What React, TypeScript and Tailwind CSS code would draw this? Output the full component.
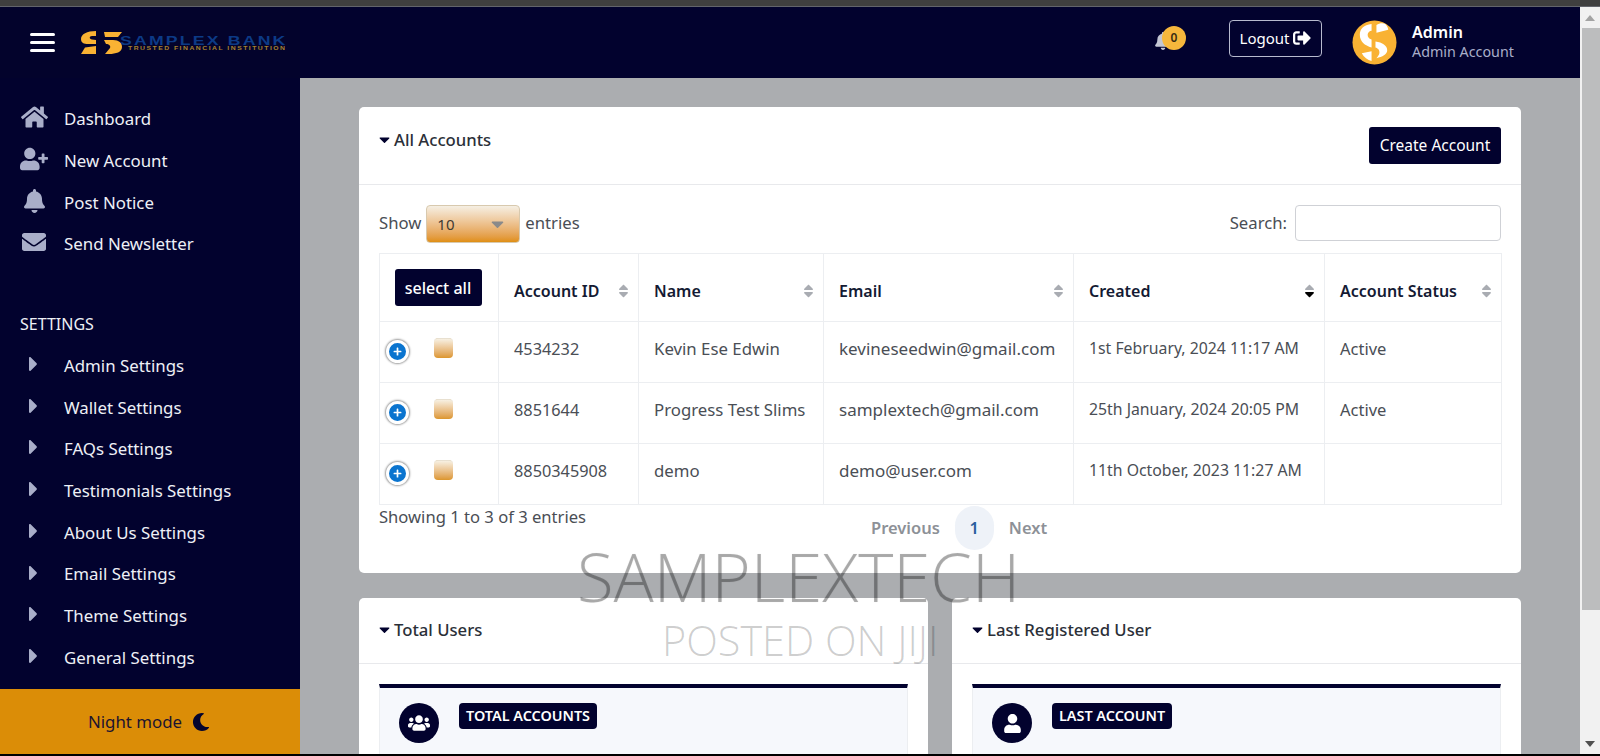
import { FaHome, FaUserPlus, FaBell, FaEnvelope, FaCaretRight, FaCaretDown, FaMoon, FaSignOutAlt, FaUsers, FaUser, FaSort, FaSortDown, FaSortUp, FaPlus } from 'react-icons/fa';
import type { ReactNode } from 'react';

const fontStack = { fontFamily: '"Noto Sans", "Open Sans", sans-serif' };

const mainMenu = [
  { label: 'Dashboard', icon: <FaHome className="w-[27px] h-[24px]" /> },
  { label: 'New Account', icon: <FaUserPlus className="w-[29px] h-[24px]" /> },
  { label: 'Post Notice', icon: <FaBell className="w-[21px] h-[24px]" /> },
  { label: 'Send Newsletter', icon: <FaEnvelope className="w-[24px] h-[24px]" /> },
];

const settingsMenu = [
  'Admin Settings',
  'Wallet Settings',
  'FAQs Settings',
  'Testimonials Settings',
  'About Us Settings',
  'Email Settings',
  'Theme Settings',
  'General Settings',
];

const accounts = [
  { id: '4534232', name: 'Kevin Ese Edwin', email: 'kevineseedwin@gmail.com', created: '1st February, 2024 11:17 AM', status: 'Active' },
  { id: '8851644', name: 'Progress Test Slims', email: 'samplextech@gmail.com', created: '25th January, 2024 20:05 PM', status: 'Active' },
  { id: '8850345908', name: 'demo', email: 'demo@user.com', created: '11th October, 2023 11:27 AM', status: '' },
];

function LogoMark({ className }: { className: string }) {
  return (
    <svg viewBox="0 0 42 24" className={className}>
      <path d="M0 8 C0 3 6 0 15 0 L15 5 L11 5 C8 5 8 8 11 8.5 L15 9 L15 13 L7 13 C3 13 0 12 0 8Z" fill="#f9b233" />
      <path d="M0 23 L4 16.5 L15 15 L15 23Z" fill="#f9b233" />
      <path d="M23 1 L41 1 L37 6 L24 6Z" fill="#f9b233" />
      <path d="M23 9 L32 9 C38 9 41 12 41 16 C41 21 35 23 28 23 L24 23 L29 17 C30 15 28 13 25 13Z" fill="#f9b233" />
    </svg>
  );
}

function Avatar() {
  return (
    <svg viewBox="0 0 46 46" className="w-[45px] h-[45px]">
      <circle cx="23" cy="23" r="22.5" fill="#f9b233" />
      <path d="M20 4 C12 5 8 9 8 15 C8 22 13 26 20 28 L20 20 C17 19 16 17 16 15 C16 13 18 11 20 11Z" fill="#fff" />
      <path d="M25 5 C28 3 32 3 34 4 C36 6 37 8 37 10 L25 13Z" fill="#fff" />
      <path d="M24 22 C31 23 36 26 36 31 C36 35 31 38 25 39 C28 36 29 33 27 30 C26 29 25 28 24 28Z" fill="#fff" />
      <path d="M10 34 L20 32 L20 42 C16 41 12 38 10 34Z" fill="#fff" />
    </svg>
  );
}

function Sidebar() {
  return (
    <aside className="w-[300px] shrink-0 flex flex-col bg-[#02022e] text-[#eef0f6]">
      <div className="h-[71px] flex items-center pl-[30px] bg-[#03032c]">
        <div className="flex flex-col gap-[5px] w-[25px]">
          <span className="h-[3px] bg-white rounded-sm" />
          <span className="h-[3px] bg-white rounded-sm" />
          <span className="h-[3px] bg-white rounded-sm" />
        </div>
        <div className="ml-[26px] flex items-center">
          <LogoMark className="w-[42px] h-[24px]" />
          <div className="w-[164px] -ml-[3px] leading-none">
            <div className="text-[13px] leading-[11px] font-bold tracking-[1.6px] text-[#0c3a86] whitespace-nowrap origin-left scale-x-[1.36]" style={{ fontFamily: '"Liberation Sans", sans-serif' }}>
              SAMPLEX BANK
            </div>
            <div className="text-[5px] leading-[5px] font-bold tracking-[1.1px] text-[#a8812e] whitespace-nowrap ml-[8px] origin-left scale-x-[1.36]" style={{ fontFamily: '"Liberation Sans", sans-serif' }}>
              TRUSTED FINANCIAL INSTITUTION
            </div>
          </div>
        </div>
      </div>
      <nav className="flex-1 pt-[20px]">
        <ul className="flex flex-col">
          {mainMenu.map((item) => (
            <li key={item.label} className="h-[41.7px] flex items-center">
              <span className="w-[64px] pl-[20px] pr-[16px] flex justify-center text-[#a9aec9] -mt-[3px]">{item.icon}</span>
              <span className="text-[16.85px]">{item.label}</span>
            </li>
          ))}
        </ul>
        <div className="mt-[45px] pl-[20px] text-[16px] h-[28px] flex items-center">SETTINGS</div>
        <ul className="flex flex-col mt-[7px]">
          {settingsMenu.map((label) => (
            <li key={label} className="h-[41.7px] flex items-center">
              <span className="w-[64px] pl-[29px] text-[#a9aec9] -mt-[3px]">
                <FaCaretRight className="w-[9px] h-[24px]" />
              </span>
              <span className="text-[16.85px]">{label}</span>
            </li>
          ))}
        </ul>
      </nav>
      <div className="h-[65px] bg-[#db8d07] text-[#1b1330] flex items-center justify-center gap-[10px] pr-[2px]">
        <span className="text-[16.85px]">Night mode</span>
        <FaMoon className="w-[18px] h-[18px] text-[#04042e]" />
      </div>
    </aside>
  );
}

function Header() {
  return (
    <header className="h-[71px] shrink-0 bg-[#02022e] flex items-center">
      <div className="ml-auto flex items-center">
        <div className="relative w-[32px] h-[24px] -mt-[9px] text-[#c3c6d3]">
          <FaBell className="w-[18px] h-[18px] absolute left-0 top-[6px]" />
          <span className="absolute left-[8px] top-0 w-[24px] h-[24px] rounded-full bg-[#f6b73c] text-[#3a2c12] text-[12px] font-semibold flex items-center justify-center">0</span>
        </div>
        <button className="ml-[43px] w-[93px] h-[37px] -mt-[9px] border border-[#b7bace] rounded-[4px] text-white text-[15px] flex items-center justify-center gap-[4px]">
          Logout <FaSignOutAlt className="w-[18px] h-[18px]" />
        </button>
        <div className="ml-[30px] flex"><Avatar /></div>
        <div className="ml-[15px] mr-[66px] w-[102px] leading-[20px] -mt-[2px]">
          <div className="text-white text-[16px] font-semibold">Admin</div>
          <div className="text-[#a9aec9] text-[14.3px] whitespace-nowrap">Admin Account</div>
        </div>
      </div>
    </header>
  );
}

function CardTitle({ children }: { children: ReactNode }) {
  return (
    <h3 className="flex items-center gap-[4px] text-[16.7px] font-medium text-[#2b2f38]">
      <FaCaretDown className="w-[11px] h-[17px] text-[#02022e]" />
      {children}
    </h3>
  );
}

function SortHead({ label, width, active }: { label: string; width: string; active?: boolean }) {
  return (
    <th className={`${width} border border-[#eceef1] pl-[15px] pr-[9px] pt-[6px] text-left text-[16px] font-semibold text-[#141a33]`}>
      <div className="flex items-center justify-between">
        <span className="whitespace-nowrap">{label}</span>
        {active ? (
          <span className="relative w-[11px] h-[16px]">
            <FaSortUp className="absolute inset-0 w-[11px] h-[16px] text-[#a9acb2]" />
            <FaSortDown className="absolute inset-0 w-[11px] h-[16px] text-black" />
          </span>
        ) : (
          <FaSort className="w-[11px] h-[16px] text-[#a9acb2]" />
        )}
      </div>
    </th>
  );
}

function AccountsTable() {
  return (
    <table className="w-[1122px] table-fixed border-collapse text-[16.5px] text-[#4a4e55]">
      <thead>
        <tr className="h-[68px]">
          <th className="w-[119px] border border-[#eceef1] align-middle pt-[6px] pr-[2px]">
            <button className="w-[87px] h-[37px] -mt-[6px] bg-[#02022e] text-white text-[16px] font-medium rounded-[3px]">select all</button>
          </th>
          <SortHead label="Account ID" width="w-[140px]" />
          <SortHead label="Name" width="w-[185px]" />
          <SortHead label="Email" width="w-[250px]" />
          <SortHead label="Created" width="w-[251px]" active />
          <SortHead label="Account Status" width="w-[177px]" />
        </tr>
      </thead>
      <tbody>
        {accounts.map((row) => (
          <tr key={row.id} className="h-[61px]">
            <td className="border border-[#eceef1] align-top">
              <div className="flex items-start pl-[6px]">
                <span className="mt-[18px] w-[23px] h-[23px] rounded-full border-[3px] border-white bg-[#0a74cf] text-white flex items-center justify-center shadow-[0_0_2px_1px_#9a9a9a]">
                  <FaPlus className="w-[9px] h-[9px]" />
                </span>
                <span className="mt-[16px] ml-[25px] w-[19px] h-[20px] rounded-[4px] border-t border-[#e8e0d0] bg-gradient-to-b from-[#f7f0e2] to-[#dc962a]" />
              </div>
            </td>
            <td className="border border-[#eceef1] px-[15px] pb-[6px] text-[16.3px]">{row.id}</td>
            <td className="border border-[#eceef1] px-[15px] pb-[6px] whitespace-nowrap text-[16.8px]">{row.name}</td>
            <td className="border border-[#eceef1] px-[15px] pb-[6px] whitespace-nowrap text-[17px]">{row.email}</td>
            <td className="border border-[#eceef1] px-[15px] pb-[6px] whitespace-nowrap text-[15.8px]">{row.created}</td>
            <td className="border border-[#eceef1] px-[15px] pb-[6px]">{row.status}</td>
          </tr>
        ))}
      </tbody>
    </table>
  );
}

function AllAccountsCard() {
  return (
    <section className="bg-white rounded-[5px]">
      <div className="h-[78px] border-b border-[#e8e9ec] flex items-start justify-between px-[20px]">
        <div className="mt-[20px]"><CardTitle>All Accounts</CardTitle></div>
        <button className="mt-[20px] w-[132px] h-[37px] bg-[#02022e] text-white text-[15.5px] rounded-[3px]">Create Account</button>
      </div>
      <div className="px-[20px] pt-[20px] h-[388px]">
        <div className="flex items-center justify-between h-[38px] mb-[10px] text-[16.7px] text-[#4a4e55]">
          <div className="flex items-center gap-[5px]">
            <span className="pb-[2px]">Show</span>
            <span className="w-[94px] h-[38px] rounded-[4px] border border-[#d8c9ae] bg-gradient-to-b from-[#f5efe3] to-[#e08f0d] flex items-center justify-between pl-[10px] pr-[15px] text-[#3f3b33] text-[15px]">
              10
              <FaCaretDown className="w-[13px] h-[20px] text-[#8a8a8a]" />
            </span>
            <span className="pb-[2px]">entries</span>
          </div>
          <div className="flex items-center gap-[8px]">
            <span className="pb-[2px]">Search:</span>
            <input className="w-[206px] h-[36px] -mt-[2px] border border-[#cfd1d6] rounded-[4px] bg-white" />
          </div>
        </div>
        <AccountsTable />
        <div className="flex text-[16.6px] text-[#4a4e55]">
          <div className="w-[492px]">Showing 1 to 3 of 3 entries</div>
          <div className="flex items-center gap-[15px] mt-[1px] text-[#8d9197] font-semibold text-[16.5px]">
            <span>Previous</span>
            <span className="w-[39px] h-[44px] rounded-full bg-[#eef2f8] text-[#2a5f9e] flex items-center justify-center">1</span>
            <span>Next</span>
          </div>
        </div>
      </div>
    </section>
  );
}

function StatCard({ title, badge, icon }: { title: string; badge: string; icon: ReactNode }) {
  return (
    <section className="bg-white rounded-t-[5px] flex-1 h-[200px]">
      <div className="h-[66px] pb-[2px] border-b border-[#e8e9ec] flex items-center px-[20px]">
        <CardTitle>{title}</CardTitle>
      </div>
      <div className="px-[20px] pt-[20px]">
        <div className="h-[120px] border-t-[4px] border-x border-t-[#02022e] border-x-[#eceef1] bg-[#f6f8fc] pl-[19px] pt-[15px] flex items-start gap-[20px]">
          <span className="w-[40px] h-[40px] rounded-full bg-[#02022e] text-white flex items-center justify-center">{icon}</span>
          <span className="h-[26px] px-[7px] pb-[1px] rounded-[4px] bg-[#02022e] text-white text-[14.4px] font-semibold flex items-center">{badge}</span>
        </div>
      </div>
    </section>
  );
}

function Scrollbar() {
  return (
    <div className="w-[20px] shrink-0 bg-[#f1f1f1] flex flex-col items-end">
      <div className="w-full h-[21px] flex items-center justify-center">
        <span className="w-0 h-0 border-x-[5px] border-x-transparent border-b-[6px] border-b-[#a3a3a3]" />
      </div>
      <div className="w-[18px] h-[582px] bg-[#bcbdbe]" />
      <div className="w-full mt-auto h-[20px] flex items-center justify-center">
        <span className="w-0 h-0 border-x-[5px] border-x-transparent border-t-[6px] border-t-[#505050]" />
      </div>
    </div>
  );
}

export default function App() {
  return (
    <div className="relative w-[1600px] h-[756px] overflow-hidden flex flex-col bg-black pb-[2px]" style={fontStack}>
      <div className="h-[7px] shrink-0 bg-[#3f3f3f] border-b border-[#62646b]" />
      <div className="flex-1 min-h-0 flex">
        <Sidebar />
        <div className="flex-1 min-w-0 flex flex-col">
          <Header />
          <main className="flex-1 min-h-0 overflow-hidden bg-[#abadb0] pl-[59px] pr-[59px] pt-[29px] flex flex-col gap-[25px]">
            <AllAccountsCard />
            <div className="flex gap-[24px]">
              <StatCard title="Total Users" badge="TOTAL ACCOUNTS" icon={<FaUsers className="w-[22px] h-[18px]" />} />
              <StatCard title="Last Registered User" badge="LAST ACCOUNT" icon={<FaUser className="w-[17px] h-[19px]" />} />
            </div>
          </main>
        </div>
        <Scrollbar />
      </div>
      <div className="absolute left-[577px] top-[541px] text-[67px] leading-[70px] text-black/25 whitespace-nowrap pointer-events-none [text-shadow:0_0_1px_rgba(0,0,0,0.12)]" style={{ fontFamily: '"Open Sans", sans-serif', fontWeight: 300 }}>
        SAMPLEXTECH
      </div>
      <div className="absolute left-[662px] top-[618px] text-[41.4px] leading-[44px] text-black/20 whitespace-nowrap pointer-events-none" style={{ fontFamily: '"Open Sans", sans-serif', fontWeight: 300 }}>
        POSTED ON JIJI
      </div>
    </div>
  );
}
